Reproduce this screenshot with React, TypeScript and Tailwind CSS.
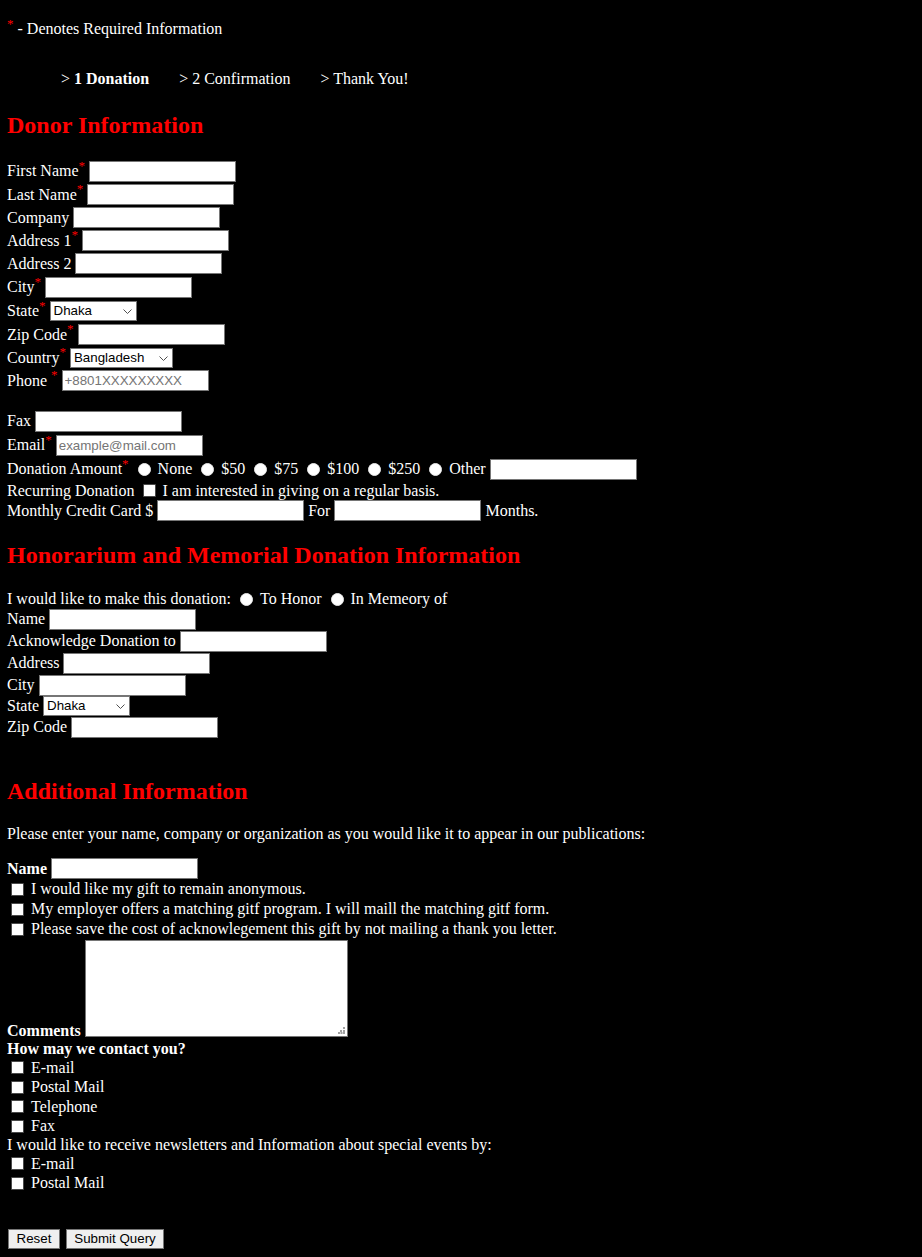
import React from "react"

const inputCls =
  "h-[21px] w-[147px] shrink-0 border border-[#767676] bg-white px-[2px] font-['Liberation_Sans',Arial,sans-serif] text-[13.33px] text-black placeholder:text-[#757575] outline-none"

function TextInput({ placeholder }: { placeholder?: string }) {
  return <input type="text" placeholder={placeholder} className={inputCls} />
}

function Select({ options, className }: { options: string[]; className: string }) {
  return (
    <div className="relative inline-flex shrink-0">
      <select
        className={`appearance-none h-[20px] border border-[#767676] bg-white pl-[3px] font-['Liberation_Sans',Arial,sans-serif] text-[13.33px] leading-[18px] text-black outline-none ${className}`}
      >
        {options.map((o) => (
          <option key={o}>{o}</option>
        ))}
      </select>
      <svg
        className="pointer-events-none absolute right-[5px] top-[8px]"
        width="9"
        height="5"
        viewBox="0 0 9 5"
        fill="none"
      >
        <path d="M0.5 0.5L4.5 4.5L8.5 0.5" stroke="#505050" strokeWidth="1" />
      </svg>
    </div>
  )
}

function Req() {
  return <sup className="text-[13px] text-[#ff0000]">*</sup>
}

function Radio({ name }: { name: string }) {
  return (
    <input
      type="radio"
      name={name}
      className="ml-[5px] mr-[3px] h-[13px] w-[13px] shrink-0 appearance-none rounded-full border border-[#e6e6e6] bg-white checked:border-[4px] checked:border-[#0075ff]"
    />
  )
}

function Check() {
  return (
    <input
      type="checkbox"
      className="ml-[4px] mr-[3px] h-[13px] w-[13px] shrink-0 appearance-none rounded-[1px] border border-[#4a4a4a] bg-white checked:bg-[#0075ff]"
    />
  )
}

const states = ["Dhaka", "Chittagong", "Khulna", "Rajshahi", "Sylhet", "Barisal", "Rangpur"]

export default function App() {
  return (
    <div className="min-h-screen bg-black pl-[7px] pt-[20px] pb-[8px] font-['Liberation_Serif','Times_New_Roman',serif] text-[16px] leading-[18px] text-white">
      {/* Required note */}
      <div className="flex h-[18px] items-center">
        <span>
          <Req /> - Denotes Required Information
        </span>
      </div>

      {/* Steps */}
      <div className="mt-[32px] flex h-[18px] items-center gap-[30px] pl-[54px]">
        <span>
          {"> "}
          <b>1 Donation</b>
        </span>
        <span>{"> 2 Confirmation"}</span>
        <span>{"> Thank You!"}</span>
      </div>

      <h2 className="mt-[23px] h-[28px] text-[24px] font-bold leading-[28px] text-[#ff0000]">Donor Information</h2>

      <form onSubmit={(e) => e.preventDefault()}>
        <div className="mt-[20px] flex h-[24px] items-center gap-[4px]">
          <span>First Name<Req /></span>
          <TextInput />
        </div>
        <div className="flex h-[23px] items-center gap-[4px]">
          <span>Last Name<Req /></span>
          <TextInput />
        </div>
        <div className="flex h-[23px] items-center gap-[4px]">
          <span>Company</span>
          <TextInput />
        </div>
        <div className="flex h-[23px] items-center gap-[4px]">
          <span>Address 1<Req /></span>
          <TextInput />
        </div>
        <div className="flex h-[23px] items-center gap-[4px]">
          <span>Address 2</span>
          <TextInput />
        </div>
        <div className="flex h-[24px] items-center gap-[4px]">
          <span>City<Req /></span>
          <TextInput />
        </div>
        <div className="flex h-[24px] items-center gap-[4px]">
          <span>State<Req /></span>
          <Select options={states} className="w-[87px]" />
        </div>
        <div className="flex h-[23px] items-center gap-[4px]">
          <span>Zip Code<Req /></span>
          <TextInput />
        </div>
        <div className="flex h-[23px] items-center gap-[4px]">
          <span>Country<Req /></span>
          <Select options={["Bangladesh", "India", "Nepal", "Pakistan"]} className="w-[103px]" />
        </div>
        <div className="flex h-[23px] items-center gap-[4px]">
          <span>Phone <Req /></span>
          <TextInput placeholder="+8801XXXXXXXXX" />
        </div>

        <div className="mt-[17px] flex h-[24px] items-center gap-[4px]">
          <span>Fax</span>
          <TextInput />
        </div>
        <div className="flex h-[24px] items-center gap-[4px]">
          <span>Email<Req /></span>
          <TextInput placeholder="example@mail.com" />
        </div>
        <div className="flex h-[24px] items-center gap-[4px]">
          <span>Donation Amount<Req /></span>
          <Radio name="amount" />
          <span>None</span>
          <Radio name="amount" />
          <span>$50</span>
          <Radio name="amount" />
          <span>$75</span>
          <Radio name="amount" />
          <span>$100</span>
          <Radio name="amount" />
          <span>$250</span>
          <Radio name="amount" />
          <span>Other</span>
          <TextInput />
        </div>
        <div className="flex h-[19px] items-center gap-[4px]">
          <span>Recurring Donation</span>
          <Check />
          <span>I am interested in giving on a regular basis.</span>
        </div>
        <div className="flex h-[21px] items-center gap-[4px]">
          <span>Monthly Credit Card $</span>
          <TextInput />
          <span>For</span>
          <TextInput />
          <span>Months.</span>
        </div>

        <h2 className="mt-[20px] h-[28px] text-[24px] font-bold leading-[28px] text-[#ff0000]">
          Honorarium and Memorial Donation Information
        </h2>

        <div className="mt-[21px] flex h-[18px] items-center gap-[4px]">
          <span>I would like to make this donation:</span>
          <Radio name="honor" />
          <span>To Honor</span>
          <Radio name="honor" />
          <span>In Memeory of</span>
        </div>
        <div className="flex h-[22px] items-center gap-[4px]">
          <span>Name</span>
          <TextInput />
        </div>
        <div className="flex h-[22px] items-center gap-[4px]">
          <span>Acknowledge Donation to</span>
          <TextInput />
        </div>
        <div className="flex h-[22px] items-center gap-[4px]">
          <span>Address</span>
          <TextInput />
        </div>
        <div className="flex h-[22px] items-center gap-[4px]">
          <span>City</span>
          <TextInput />
        </div>
        <div className="flex h-[20px] items-center gap-[4px]">
          <span>State</span>
          <Select options={states} className="w-[87px]" />
        </div>
        <div className="flex h-[22px] items-center gap-[4px]">
          <span>Zip Code</span>
          <TextInput />
        </div>

        <h2 className="mt-[39px] h-[28px] text-[24px] font-bold leading-[28px] text-[#ff0000]">Additional Information</h2>

        <div className="mt-[20px] flex h-[18px] items-center">
          <span>Please enter your name, company or organization as you would like it to appear in our publications:</span>
        </div>
        <div className="mt-[15px] flex h-[21px] items-center gap-[4px]">
          <b>Name</b>
          <TextInput />
        </div>
        <div className="flex h-[20px] items-center gap-[4px]">
          <Check />
          <span>I would like my gift to remain anonymous.</span>
        </div>
        <div className="flex h-[20px] items-center gap-[4px]">
          <Check />
          <span>My employer offers a matching gitf program. I will maill the matching gitf form.</span>
        </div>
        <div className="flex h-[20px] items-center gap-[4px]">
          <Check />
          <span>Please save the cost of acknowlegement this gift by not mailing a thank you letter.</span>
        </div>
        <div className="mt-[1px] flex h-[100px] items-end gap-[4px]">
          <b>Comments</b>
          <div className="relative mb-[3px] h-[97px] w-[263px] shrink-0">
            <textarea className="h-full w-full resize-none border border-[#767676] bg-white font-['Liberation_Mono',monospace] text-[13.33px] text-black outline-none" />
            {/* resize grip */}
            <svg
              className="pointer-events-none absolute bottom-[3px] right-[3px]"
              width="7"
              height="7"
              viewBox="0 0 7 7"
            >
              <rect x="5" y="0" width="2" height="2" fill="#a0a0a0" />
              <rect x="2" y="3" width="2" height="2" fill="#a0a0a0" />
              <rect x="5" y="3" width="2" height="2" fill="#a0a0a0" />
              <rect x="0" y="5" width="2" height="2" fill="#a0a0a0" />
              <rect x="2.5" y="5" width="2" height="2" fill="#a0a0a0" />
              <rect x="5" y="5" width="2" height="2" fill="#a0a0a0" />
            </svg>
          </div>
        </div>

        <div className="flex h-[18px] items-center">
          <b>How may we contact you?</b>
        </div>
        <div className="flex h-[19px] items-center gap-[4px]">
          <Check />
          <span>E-mail</span>
        </div>
        <div className="flex h-[20px] items-center gap-[4px]">
          <Check />
          <span>Postal Mail</span>
        </div>
        <div className="flex h-[19px] items-center gap-[4px]">
          <Check />
          <span>Telephone</span>
        </div>
        <div className="flex h-[20px] items-center gap-[4px]">
          <Check />
          <span>Fax</span>
        </div>
        <div className="flex h-[18px] items-center">
          <span>I would like to receive newsletters and Information about special events by:</span>
        </div>
        <div className="flex h-[19px] items-center gap-[4px]">
          <Check />
          <span>E-mail</span>
        </div>
        <div className="flex h-[20px] items-center gap-[4px]">
          <Check />
          <span>Postal Mail</span>
        </div>

        <div className="mt-[36px] flex h-[20px] items-center gap-[6px] pl-[1px]">
          <button
            type="reset"
            className="h-[20px] w-[52px] border border-[#767676] bg-[#efefef] font-['Liberation_Sans',Arial,sans-serif] text-[13.33px] leading-[16px] text-black"
          >
            Reset
          </button>
          <button
            type="submit"
            className="h-[20px] w-[98px] border border-[#767676] bg-[#efefef] font-['Liberation_Sans',Arial,sans-serif] text-[13.33px] leading-[16px] text-black"
          >
            Submit Query
          </button>
        </div>
      </form>
    </div>
  )
}
